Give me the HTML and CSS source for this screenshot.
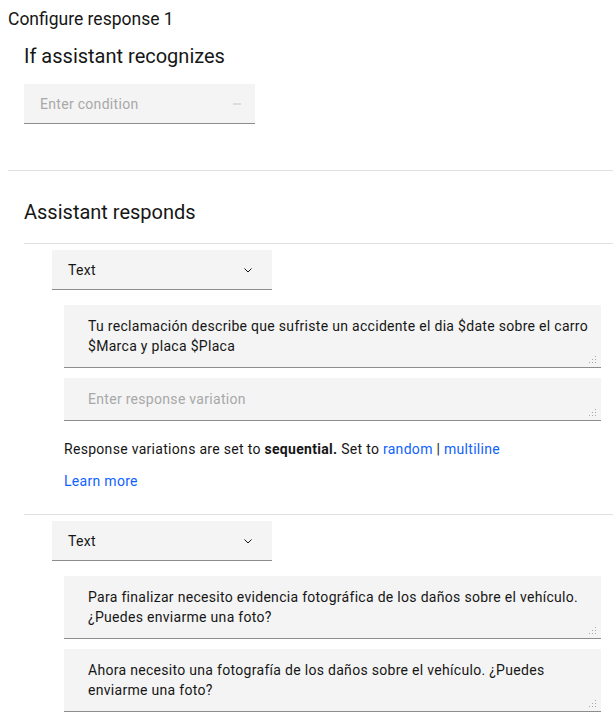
FILE: index.html
```html
<!DOCTYPE html>
<html lang="en">
<head>
<meta charset="utf-8">
<title>Configure response 1</title>
<link rel="stylesheet" href="styles.css">
</head>
<body>
<div class="page">
  <h1 class="title">Configure response 1</h1>

  <section class="condition-section">
    <h2 class="section-title">If assistant recognizes</h2>
    <div class="condition-input">
      <span class="placeholder">Enter condition</span>
      <span class="dash"></span>
    </div>
  </section>

  <hr class="divider divider-full">

  <section class="responds-section">
    <h2 class="section-title">Assistant responds</h2>
    <hr class="divider">

    <div class="response">
      <div class="dropdown">
        <span>Text</span>
        <svg class="chevron" width="16" height="16" viewBox="0 0 16 16"><path d="M4.5 6.5 L8 10 L11.5 6.5" fill="none" stroke="#161616" stroke-width="1"/></svg>
      </div>
      <div class="variations">
        <div class="textarea">Tu reclamación describe que sufriste un accidente el dia $date sobre el carro $Marca y placa $Placa<svg class="grip" width="8" height="8" viewBox="0 0 8 8"><g fill="#a8a8a8"><rect x="6" y="0" width="1" height="1"/><rect x="3" y="3" width="1" height="1"/><rect x="6" y="3" width="1" height="1"/><rect x="0" y="6" width="1" height="1"/><rect x="3" y="6" width="1" height="1"/><rect x="6" y="6" width="1" height="1"/></g></svg></div>
        <div class="textarea empty">Enter response variation<svg class="grip" width="8" height="8" viewBox="0 0 8 8"><g fill="#a8a8a8"><rect x="6" y="0" width="1" height="1"/><rect x="3" y="3" width="1" height="1"/><rect x="6" y="3" width="1" height="1"/><rect x="0" y="6" width="1" height="1"/><rect x="3" y="6" width="1" height="1"/><rect x="6" y="6" width="1" height="1"/></g></svg></div>
        <p class="helper">Response variations are set to <strong>sequential.</strong> Set to <a href="#">random</a> | <a href="#">multiline</a></p>
        <p class="learn"><a href="#">Learn more</a></p>
      </div>
    </div>

    <hr class="divider">

    <div class="response">
      <div class="dropdown">
        <span>Text</span>
        <svg class="chevron" width="16" height="16" viewBox="0 0 16 16"><path d="M4.5 6.5 L8 10 L11.5 6.5" fill="none" stroke="#161616" stroke-width="1"/></svg>
      </div>
      <div class="variations">
        <div class="textarea">Para finalizar necesito evidencia fotográfica de los daños sobre el vehículo. ¿Puedes enviarme una foto?<svg class="grip" width="8" height="8" viewBox="0 0 8 8"><g fill="#a8a8a8"><rect x="6" y="0" width="1" height="1"/><rect x="3" y="3" width="1" height="1"/><rect x="6" y="3" width="1" height="1"/><rect x="0" y="6" width="1" height="1"/><rect x="3" y="6" width="1" height="1"/><rect x="6" y="6" width="1" height="1"/></g></svg></div>
        <div class="textarea">Ahora necesito una fotografía de los daños sobre el vehículo. ¿Puedes enviarme una foto?<svg class="grip" width="8" height="8" viewBox="0 0 8 8"><g fill="#a8a8a8"><rect x="6" y="0" width="1" height="1"/><rect x="3" y="3" width="1" height="1"/><rect x="6" y="3" width="1" height="1"/><rect x="0" y="6" width="1" height="1"/><rect x="3" y="6" width="1" height="1"/><rect x="6" y="6" width="1" height="1"/></g></svg></div>
      </div>
    </div>
  </section>
</div>
</body>
</html>
```

FILE: styles.css
```css
* { box-sizing: border-box; }

html, body {
  margin: 0;
  padding: 0;
  background: #ffffff;
}

body {
  font-family: Roboto, "Noto Sans", sans-serif;
  color: #161616;
  font-size: 14px;
  line-height: 20px;
  letter-spacing: 0.3px;
  overflow: hidden;
}

.page {
  padding: 5px 0 0 8px;
}

.title {
  margin: 0;
  font-size: 17.5px;
  line-height: 28px;
  font-weight: 400;
  letter-spacing: 0;
  color: #161616;
}

.condition-section {
  padding-left: 16px;
}

.section-title {
  margin: 0;
  font-size: 20px;
  line-height: 28px;
  font-weight: 400;
  letter-spacing: 0;
  color: #161616;
}

.condition-section .section-title {
  margin-top: 9px;
}

.condition-input {
  margin-top: 14px;
  width: 231px;
  height: 40px;
  background: #f4f4f4;
  border-bottom: 1px solid #8d8d8d;
  display: flex;
  align-items: center;
  justify-content: space-between;
  padding: 0 14px 0 16px;
}

.placeholder {
  color: #a8a8a8;
}

.dash {
  width: 8px;
  height: 2px;
  background: #dcdcdc;
}

.divider {
  border: 0;
  height: 1px;
  background: #e0e0e0;
  margin: 0;
}

.divider-full {
  margin-top: 46px;
}

.responds-section {
  padding-left: 16px;
}

.responds-section .section-title {
  margin-top: 27px;
  margin-bottom: 17px;
}

.response {
  padding: 6px 12px 0 28px;
}

.dropdown {
  width: 220px;
  height: 40px;
  background: #f4f4f4;
  border-bottom: 1px solid #8d8d8d;
  display: flex;
  align-items: center;
  justify-content: space-between;
  padding: 0 16px;
}

.chevron {
  display: block;
}

.variations {
  padding: 15px 0 0 12px;
  display: flex;
  flex-direction: column;
  gap: 10px;
}

.textarea {
  position: relative;
  background: #f4f4f4;
  border-bottom: 1px solid #8d8d8d;
  padding: 11px 12px 11px 24px;
  min-height: 42px;
}

.textarea.empty {
  color: #a8a8a8;
}

.grip {
  position: absolute;
  right: 4px;
  bottom: 3px;
  display: block;
}

.helper {
  margin: 8px 0 0;
  color: #161616;
}

.helper strong {
  font-weight: 700;
}

a {
  color: #0f62fe;
  text-decoration: none;
}

.learn {
  margin: 2px 0 23px;
}
```
